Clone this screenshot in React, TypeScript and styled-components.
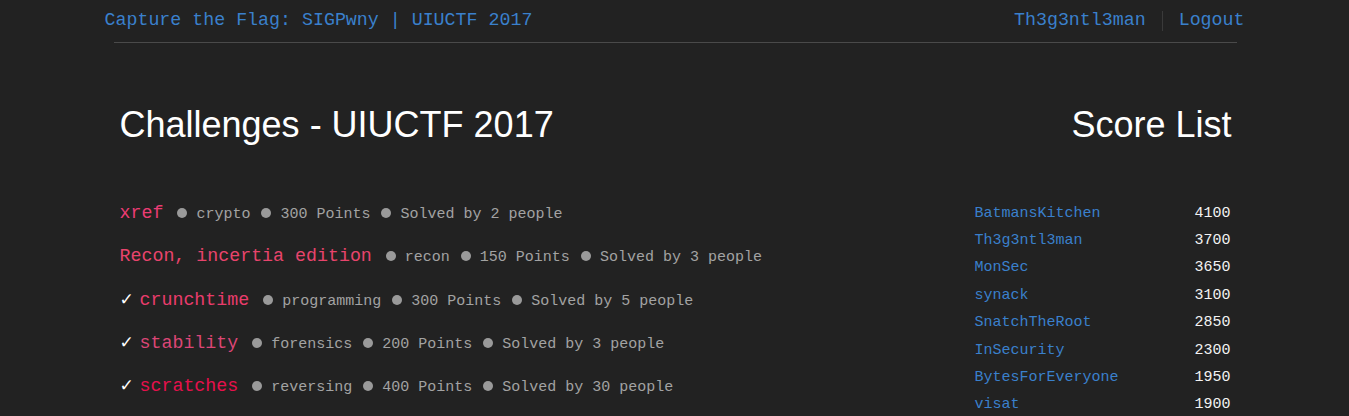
import React from 'react';
import styled, { createGlobalStyle } from 'styled-components';

type Challenge = {
  name: string;
  category: string;
  points: number;
  solves: number;
  solved: boolean;
  color: string;
};

const challenges: Challenge[] = [
  { name: 'xref', category: 'crypto', points: 300, solves: 2, solved: false, color: '#ec3c74' },
  { name: 'Recon, incertia edition', category: 'recon', points: 150, solves: 3, solved: false, color: '#e8446c' },
  { name: 'crunchtime', category: 'programming', points: 300, solves: 5, solved: true, color: '#e93c6c' },
  { name: 'stability', category: 'forensics', points: 200, solves: 3, solved: true, color: '#dc4676' },
  { name: 'scratches', category: 'reversing', points: 400, solves: 30, solved: true, color: '#e6104c' },
];

const scores: [string, number][] = [
  ['BatmansKitchen', 4100],
  ['Th3g3ntl3man', 3700],
  ['MonSec', 3650],
  ['synack', 3100],
  ['SnatchTheRoot', 2850],
  ['InSecurity', 2300],
  ['BytesForEveryone', 1950],
  ['visat', 1900],
];

const GlobalStyle = createGlobalStyle`
  body {
    margin: 0;
    background: #222222;
    font-family: "Liberation Mono", "DejaVu Sans Mono", monospace;
    color: #a0a0a0;
  }
`;

export default function App() {
  return (
    <>
      <GlobalStyle />
      <Container>
        <NavBar>
          <NavLink href="#">Capture the Flag: SIGPwny | UIUCTF 2017</NavLink>
          <NavRight>
            <NavLink href="#">Th3g3ntl3man</NavLink>
            <NavDivider />
            <NavLink href="#">Logout</NavLink>
          </NavRight>
        </NavBar>
        <Rule />
        <Main>
          <LeftCol>
            <Heading>Challenges - UIUCTF 2017</Heading>
            <ChallengeList>
              {challenges.map((c) => (
                <ChallengeRow key={c.name}>
                  {c.solved && <Check>✓</Check>}
                  <ChallengeName href="#" $color={c.color}>
                    {c.name}
                  </ChallengeName>
                  <Dot $first />
                  <span>{c.category}</span>
                  <Dot />
                  <span>{c.points} Points</span>
                  <Dot />
                  <span>Solved by {c.solves} people</span>
                </ChallengeRow>
              ))}
            </ChallengeList>
          </LeftCol>
          <RightCol>
            <Heading $right>Score List</Heading>
            <ScoreTable>
              <tbody>
                {scores.map(([team, score]) => (
                  <tr key={team}>
                    <TeamCell>
                      <TeamLink href="#">{team}</TeamLink>
                    </TeamCell>
                    <ScoreCell>{score}</ScoreCell>
                  </tr>
                ))}
              </tbody>
            </ScoreTable>
          </RightCol>
        </Main>
      </Container>
    </>
  );
}

const Container = styled.div`
  width: 1140px;
  margin: 0 auto;
  padding: 0 15px;
`;

const NavBar = styled.nav`
  display: flex;
  justify-content: space-between;
  align-items: center;
  padding: 10px 0 11px;
`;

const NavLink = styled.a`
  font-size: 18.3px;
  line-height: 21px;
  color: #3a80cc;
  text-decoration: none;
`;

const NavRight = styled.div`
  display: flex;
  align-items: center;
`;

const NavDivider = styled.span`
  width: 1px;
  height: 20px;
  margin: 0 16px;
  background: #3a3a3a;
`;

const Rule = styled.div`
  height: 1px;
  margin: 0 8px 0 9px;
  background: #4a4a4a;
`;

const Main = styled.main`
  display: flex;
  padding-top: 42px;
`;

const LeftCol = styled.section`
  flex: 0 0 75%;
  box-sizing: border-box;
  padding: 0 15px;
`;

const RightCol = styled.aside`
  flex: 0 0 25%;
  box-sizing: border-box;
  padding: 0 13px 0 15px;
`;

const Heading = styled.h1<{ $right?: boolean }>`
  margin: 20px 0 10px;
  font-family: "Liberation Sans", Arial, sans-serif;
  font-weight: 400;
  font-size: 36px;
  line-height: 1.1;
  color: #ffffff;
  text-align: ${(p) => (p.$right ? 'right' : 'left')};
`;

const ChallengeList = styled.div`
  margin-top: 47px;
`;

const ChallengeRow = styled.div`
  height: 43px;
  line-height: 43px;
  font-size: 15px;
  color: #a3a3a3;
  white-space: nowrap;
`;

const Check = styled.span`
  display: inline-block;
  width: 20px;
  font-family: "DejaVu Sans", sans-serif;
  font-size: 17px;
  color: #ffffff;
`;

const ChallengeName = styled.a<{ $color: string }>`
  font-size: 18.3px;
  color: ${(p) => p.$color};
  text-decoration: none;
`;

const Dot = styled.span<{ $first?: boolean }>`
  display: inline-block;
  width: 10px;
  height: 10px;
  border-radius: 50%;
  background: #9a9a9a;
  vertical-align: middle;
  margin: -2px 9px 0 ${(p) => (p.$first ? '14px' : '11px')};
`;

const ScoreTable = styled.table`
  width: 100%;
  margin-top: 55px;
  border-collapse: collapse;
  font-size: 15px;
`;

const TeamCell = styled.td`
  padding: 3px 0;
  line-height: 21.4px;
`;

const TeamLink = styled.a`
  color: #3a80cc;
  text-decoration: none;
`;

const ScoreCell = styled.td`
  padding: 3px 1px 3px 8px;
  line-height: 21.4px;
  text-align: right;
  color: #f2f2f2;
`;
